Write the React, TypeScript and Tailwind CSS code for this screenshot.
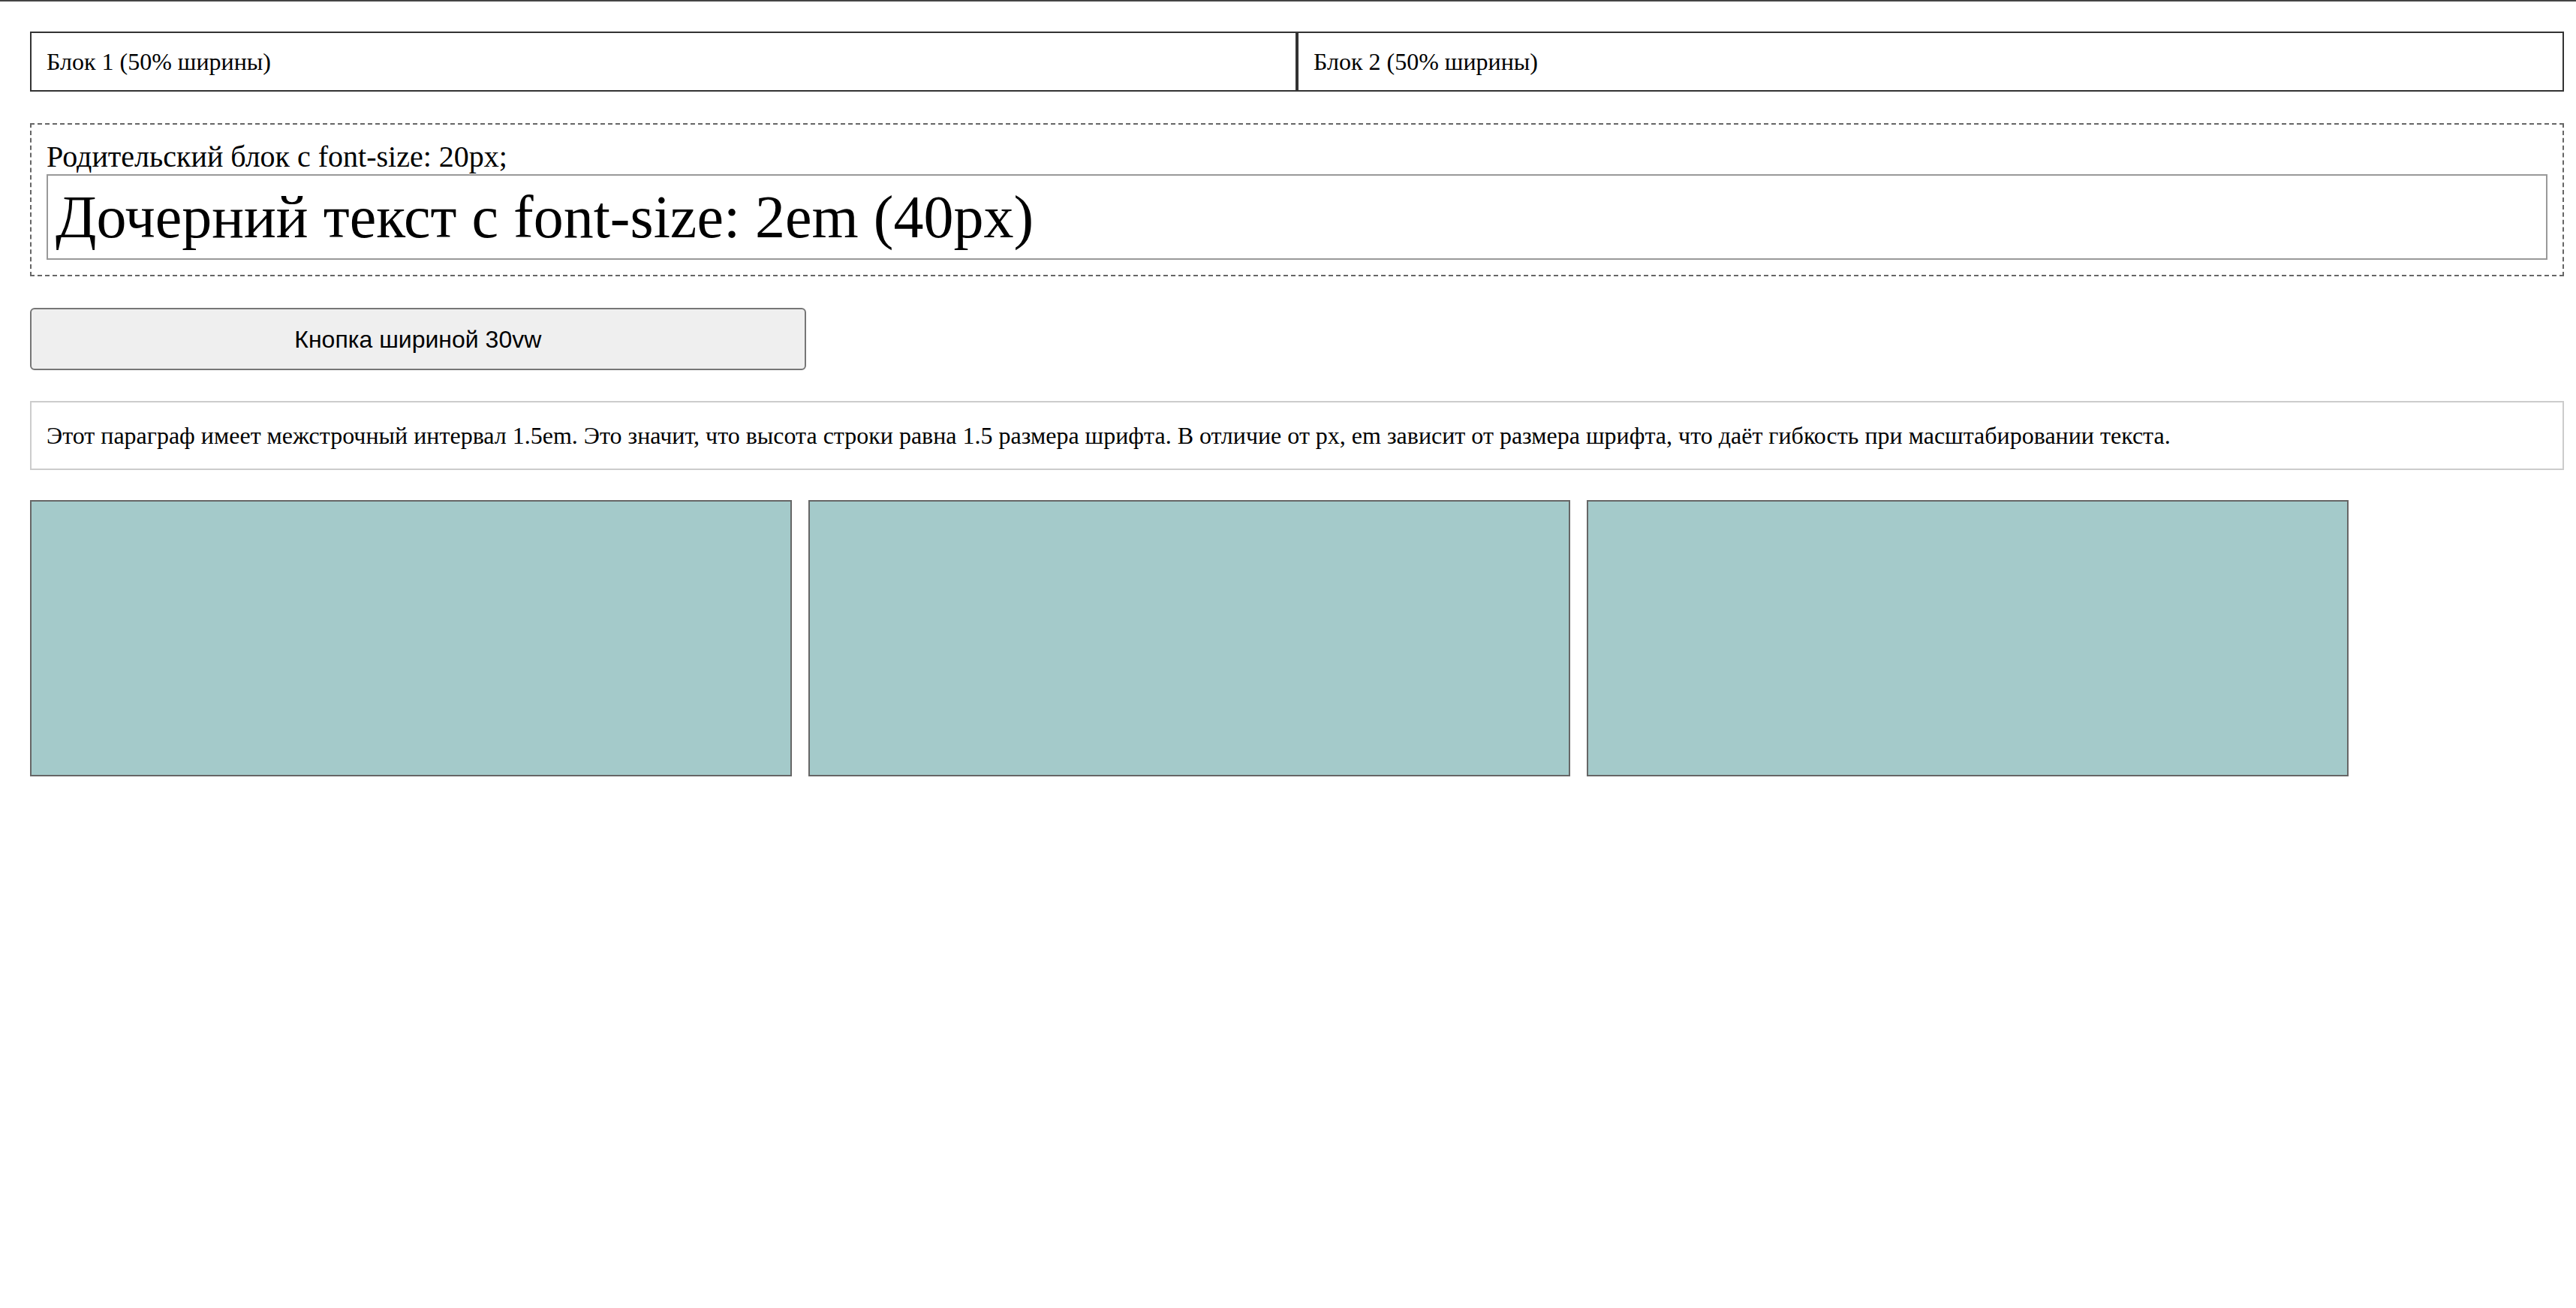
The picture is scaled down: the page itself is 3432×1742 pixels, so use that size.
export default function App() {
  return (
    <div className="min-h-screen bg-white text-black" style={{ fontFamily: '"Liberation Serif", "Times New Roman", serif' }}>
      {/* верхняя линия */}
      <div className="h-[2px] w-full bg-[#444]" />

      <div className="flex flex-col pl-[40px] pr-[16px] pt-[40px]">
        {/* два блока по 50% */}
        <div className="flex">
          <div className="box-border w-1/2 border-2 border-[#333] p-[20px] text-[32px] leading-[36px]">
            Блок 1 (50% ширины)
          </div>
          <div className="box-border w-1/2 border-2 border-[#333] p-[20px] text-[32px] leading-[36px]">
            Блок 2 (50% ширины)
          </div>
        </div>

        {/* em-пример */}
        <div className="mt-[42px] border-2 border-dashed border-[#666] p-[20px] text-[40px] leading-[46px]">
          Родительский блок с font-size: 20px;
          <div className="border-2 border-[#999] px-[10px] py-[9px] text-[80px] leading-[92px]">
            Дочерний текст с font-size: 2em (40px)
          </div>
        </div>

        {/* кнопка 30vw */}
        <div className="mt-[42px]">
          <button
            className="box-content h-[79px] w-[30vw] rounded-[6px] border-2 border-[#767676] bg-[#efefef] text-[32px] text-black"
            style={{ fontFamily: '"Liberation Sans", Arial, sans-serif' }}
          >
            Кнопка шириной 30vw
          </button>
        </div>

        {/* параграф */}
        <p className="mt-[41px] border-2 border-[#ccc] p-[20px] text-[32px] leading-[48px]">
          Этот параграф имеет межстрочный интервал 1.5em. Это значит, что высота строки равна 1.5 размера шрифта. В
          отличие от px, em зависит от размера шрифта, что даёт гибкость при масштабировании текста.
        </p>

        {/* бирюзовые блоки */}
        <div className="mt-[40px] flex gap-[22px]">
          {[0, 1, 2].map((i) => (
            <div key={i} className="h-[368px] w-[1015px] border-2 border-[#666] bg-[#a4caca]" />
          ))}
        </div>
      </div>
    </div>
  );
}
